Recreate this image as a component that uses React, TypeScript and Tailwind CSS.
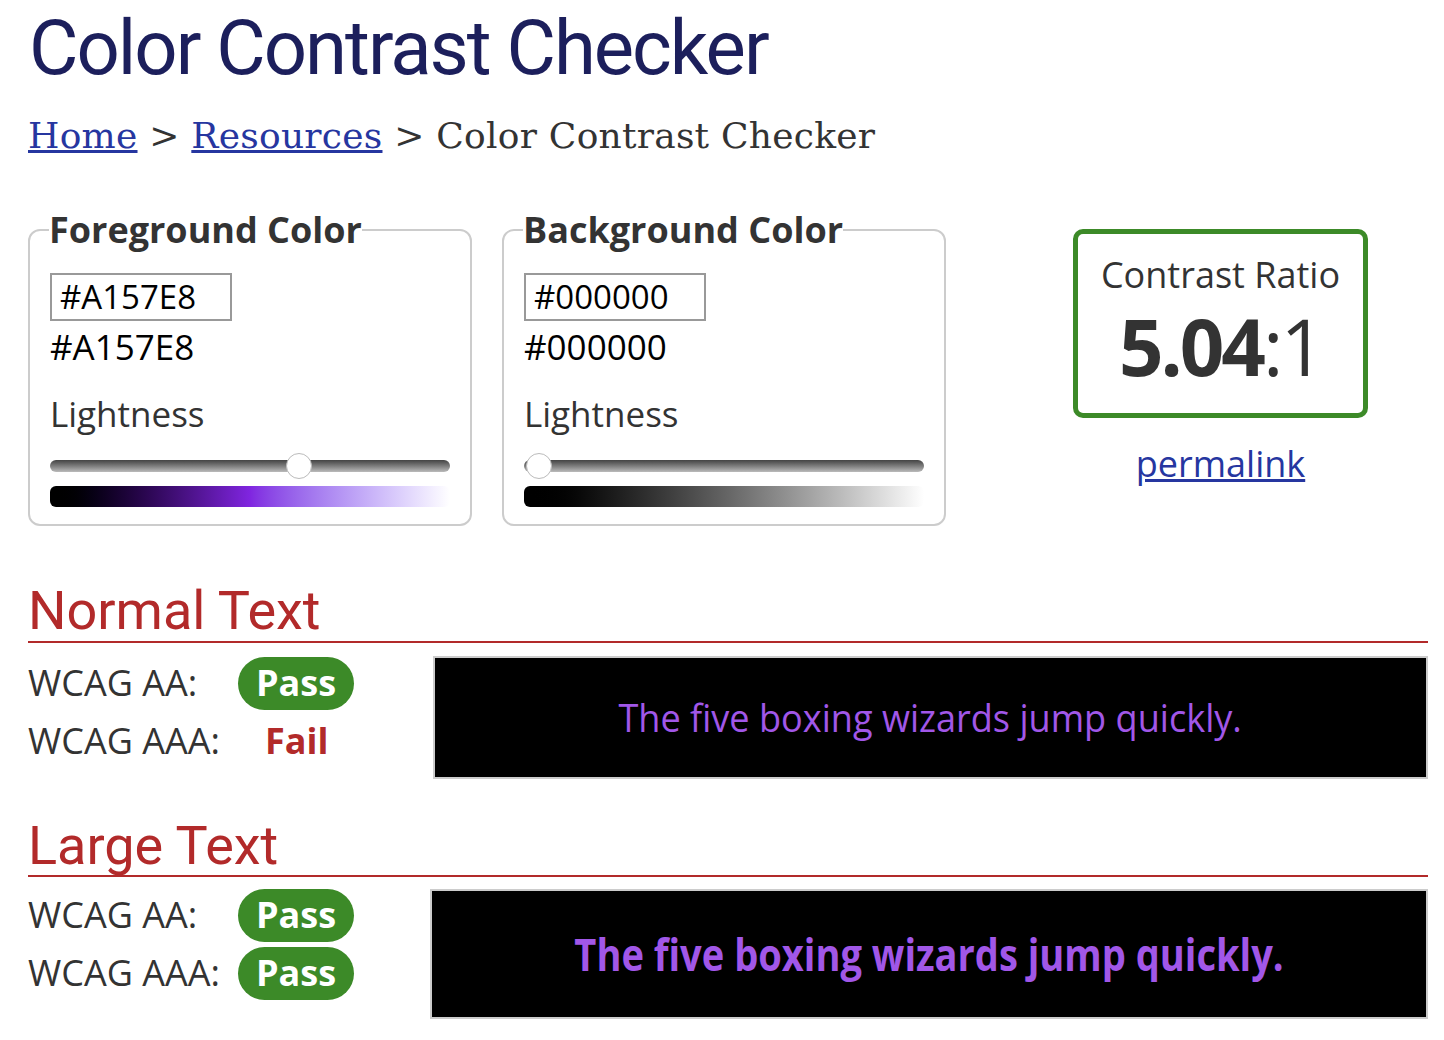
import React from "react";

const OS = "font-['Open_Sans',sans-serif]";

function Pill({ children }: { children: React.ReactNode }) {
  return (
    <span className={`inline-flex items-center justify-center w-[116px] h-[53px] rounded-full bg-[#3c8a28] text-white font-bold text-[36px] leading-none ${OS}`}>
      {children}
    </span>
  );
}

function ColorBox({
  title,
  value,
  thumb,
  gradient,
}: {
  title: string;
  value: string;
  thumb: number;
  gradient: string;
}) {
  return (
    <fieldset className="w-[443px] h-[316px] border-2 border-[#cccccc] rounded-[12px] pl-[20px] pr-[20px] pt-0 m-0 relative">
      <legend className={`px-0 -ml-[1px] text-[36px] font-bold text-[#333] leading-[40px] ${OS}`}>{title}</legend>
      <div className={`mt-[23px] w-[182px] h-[48px] border-2 border-[#999] flex items-center pl-[8px] text-[33px] text-black ${OS}`}>
        {value}
      </div>
      <div className={`text-[35px] leading-[52px] text-black ${OS}`}>{value}</div>
      <div className={`mt-[19px] text-[35px] leading-[44px] text-[#333] ${OS}`}>Lightness</div>
      <div className="relative mt-[24px] h-[12px] w-[400px] rounded-full bg-gradient-to-b from-[#444] to-[#bbb]">
        <div
          className="absolute top-1/2 w-[26px] h-[26px] -translate-x-1/2 -translate-y-1/2 rounded-full bg-white border border-[#bbb]"
          style={{ left: `${thumb}px` }}
        />
      </div>
      <div className={`mt-[14px] h-[21px] w-[400px] rounded-[6px] ${gradient}`} />
    </fieldset>
  );
}

function ResultRow({ label, children }: { label: string; children: React.ReactNode }) {
  return (
    <div className="flex items-center h-[58px]">
      <span className={`w-[210px] text-[36px] text-[#333] ${OS}`}>{label}</span>
      {children}
    </div>
  );
}

export default function App() {
  return (
    <div className="bg-white w-[1444px] h-[1040px] overflow-hidden pl-[28px] pr-[16px]">
      <h1 className="font-['Roboto',sans-serif] text-[#1c1f5c] text-[76px] leading-none pt-[10px] pl-[1px] tracking-[-2px]">
        Color Contrast Checker
      </h1>
      <div className="mt-[32px] font-['DejaVu_Serif',serif] text-[36px] tracking-[0.25px] leading-none text-[#333]">
        <a href="#" className="text-[#2636a0] underline">Home</a>
        <span> &gt; </span>
        <a href="#" className="text-[#2636a0] underline">Resources</a>
        <span> &gt; Color Contrast Checker</span>
      </div>

      <div className="flex mt-[56px]">
        <ColorBox
          title="Foreground Color"
          value="#A157E8"
          thumb={249}
          gradient="bg-gradient-to-r from-[#000000] via-[#8025e0] to-[#ffffff]"
        />
        <div className="w-[30px]" />
        <ColorBox
          title="Background Color"
          value="#000000"
          thumb={15}
          gradient="bg-gradient-to-r from-[#000000] to-[#ffffff]"
        />
        <div className="ml-[127px] mt-[19px] flex flex-col items-center">
          <div className="w-[295px] h-[189px] border-[5px] border-[#3c8a28] rounded-[10px] flex flex-col items-center">
            <div className={`mt-[23px] text-[36px] leading-[36px] text-[#333] ${OS}`}>Contrast Ratio</div>
            <div className={`mt-[13px] text-[78px] leading-[80px] tracking-[-3px] text-[#333] ${OS}`}>
              <span className="font-bold">5.04</span>:1
            </div>
          </div>
          <a href="#" className={`mt-[22px] text-[36px] leading-[48px] text-[#2636a0] underline ${OS}`}>permalink</a>
        </div>
      </div>

      <h2 className="mt-[57px] font-['Roboto',sans-serif] text-[#b22a2a] text-[54px] leading-[56px]">Normal Text</h2>
      <div className="mt-[2px] h-[2px] bg-[#b22a2a] w-[1400px]" />
      <div className="flex mt-[13px]">
        <div className="w-[405px] -mt-[2px]">
          <ResultRow label="WCAG AA:">
            <Pill>Pass</Pill>
          </ResultRow>
          <ResultRow label="WCAG AAA:">
            <span className={`ml-[27px] text-[#b22a2a] font-bold text-[36px] ${OS}`}>Fail</span>
          </ResultRow>
        </div>
        <div className={`w-[995px] h-[123px] bg-black border-2 border-[#cccccc] flex items-center justify-center text-[38px] text-[#A157E8] ${OS}`}>
          <span className="inline-block scale-x-[0.95]">The five boxing wizards jump quickly.</span>
        </div>
      </div>

      <h2 className="mt-[39px] font-['Roboto',sans-serif] text-[#b22a2a] text-[54px] leading-[56px]">Large Text</h2>
      <div className="mt-[1px] h-[2px] bg-[#b22a2a] w-[1400px]" />
      <div className="flex mt-[12px]">
        <div className="w-[402px] -mt-[3px]">
          <ResultRow label="WCAG AA:">
            <Pill>Pass</Pill>
          </ResultRow>
          <ResultRow label="WCAG AAA:">
            <Pill>Pass</Pill>
          </ResultRow>
        </div>
        <div className={`w-[998px] h-[130px] bg-black border-2 border-[#cccccc] flex items-center justify-center text-[44px] font-bold text-[#A157E8] ${OS}`}>
          <span className="inline-block scale-x-[0.865]">The five boxing wizards jump quickly.</span>
        </div>
      </div>
    </div>
  );
}
